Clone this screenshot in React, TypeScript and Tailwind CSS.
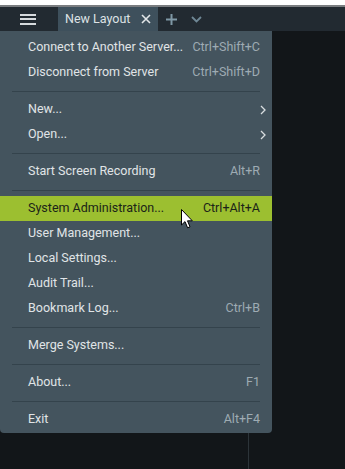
import { Fragment } from 'react';

type Item =
  | { sep: true }
  | { label: string; shortcut?: string; sub?: boolean; active?: boolean };

const items: Item[] = [
  { label: 'Connect to Another Server...', shortcut: 'Ctrl+Shift+C' },
  { label: 'Disconnect from Server', shortcut: 'Ctrl+Shift+D' },
  { sep: true },
  { label: 'New...', sub: true },
  { label: 'Open...', sub: true },
  { sep: true },
  { label: 'Start Screen Recording', shortcut: 'Alt+R' },
  { sep: true },
  { label: 'System Administration...', shortcut: 'Ctrl+Alt+A', active: true },
  { label: 'User Management...' },
  { label: 'Local Settings...' },
  { label: 'Audit Trail...' },
  { label: 'Bookmark Log...', shortcut: 'Ctrl+B' },
  { sep: true },
  { label: 'Merge Systems...' },
  { sep: true },
  { label: 'About...', shortcut: 'F1' },
  { sep: true },
  { label: 'Exit', shortcut: 'Alt+F4' },
];

function Cursor() {
  return (
    <svg
      width="14"
      height="21"
      viewBox="0 0 14 21"
      className="absolute left-[181px] top-[209px]"
    >
      <path
        d="M0.5 0.5 L0.5 16 L4 12.6 L6.6 18.8 L9 17.8 L6.5 11.8 L11.3 11.8 Z"
        fill="#fff"
        stroke="#000"
        strokeWidth="1"
        strokeLinejoin="round"
      />
    </svg>
  );
}

export default function App() {
  return (
    <div
      className="relative w-[345px] h-[469px] overflow-hidden bg-[#121619] text-[12.5px]"
      style={{ fontFamily: 'Roboto, "Noto Sans", sans-serif' }}
    >
      <div className="h-[5px] bg-white" />
      <div className="h-[2px] bg-[#7a7d80]" />
      <div className="h-[24px] bg-[#222a31] flex items-stretch">
        <div className="w-[58px] flex items-center justify-center">
          <div className="flex flex-col gap-[2.5px] w-[16px] -ml-[2px]">
            <div className="h-[2px] bg-[#d6dadd]" />
            <div className="h-[2px] bg-[#d6dadd]" />
            <div className="h-[2px] bg-[#d6dadd]" />
          </div>
        </div>
        <div className="w-[100px] bg-[#3e505c] flex items-center pl-[7px] pr-[6px] text-[#dde2e5]">
          <span className="flex-1">New Layout</span>
          <svg width="10" height="10" viewBox="0 0 10 10" className="mr-[1px]">
            <path d="M1 1 L9 9 M9 1 L1 9" stroke="#e2e6e8" strokeWidth="1.6" />
          </svg>
        </div>
        <div className="flex items-center gap-[14px] pl-[8px]">
          <svg width="11" height="11" viewBox="0 0 11 11">
            <path d="M5.5 0 V11 M0 5.5 H11" stroke="#7f98a6" strokeWidth="2" />
          </svg>
          <svg width="11" height="7" viewBox="0 0 11 7">
            <path d="M1 1 L5.5 5.5 L10 1" fill="none" stroke="#6f8795" strokeWidth="1.8" />
          </svg>
        </div>
      </div>
      <div className="flex h-[438px]">
        <div className="w-[249px] border-r border-[#2c3439]" />
      </div>

      <div className="absolute left-0 top-[31px] w-[272px] bg-[#44545e] rounded-b-[4px] pt-[4px] pb-[1px]">
        {items.map((it, i) =>
          'sep' in it ? (
            <div key={i} className="h-[12px] pt-[6px] px-[12px]">
              <div className="h-px bg-[#34434c]" />
            </div>
          ) : (
            <Fragment key={i}>
              <div
                className={
                  'h-[25px] flex items-center pl-[28px] pr-[12px] ' +
                  (it.active ? 'bg-[#9cbf30] text-[#1b2418]' : 'text-[#e0e4e7]')
                }
              >
                <span className="flex-1">{it.label}</span>
                {it.shortcut && (
                  <span className={it.active ? 'text-[#1b2418]' : 'text-[#9eabb3]'}>
                    {it.shortcut}
                  </span>
                )}
                {it.sub && (
                  <svg width="6" height="10" viewBox="0 0 6 10" className="-mr-[6px]">
                    <path d="M1 1 L5 5 L1 9" fill="none" stroke="#d8dde0" strokeWidth="1.3" />
                  </svg>
                )}
              </div>
            </Fragment>
          )
        )}
      </div>
      <Cursor />
    </div>
  );
}
